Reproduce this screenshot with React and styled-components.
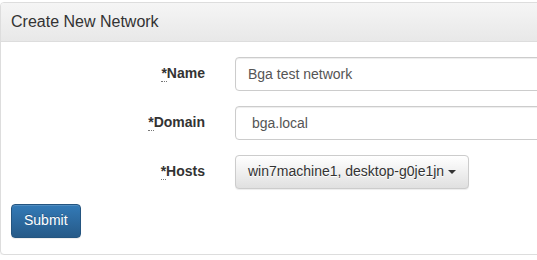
import React from "react";
import styled, { createGlobalStyle } from "styled-components";

const Global = createGlobalStyle`
  html, body { margin: 0; padding: 0; overflow: hidden; background: #fff; }
  body {
    font-family: "Liberation Sans", Arial, Helvetica, sans-serif;
    font-size: 14px;
    line-height: 1.42857;
    color: #333;
  }
  * { box-sizing: border-box; }
`;

const Panel = styled.div`
  margin-top: 2px;
  width: 600px;
  border: 1px solid #ddd;
  border-radius: 4px;
  box-shadow: 0 1px 2px rgba(0, 0, 0, 0.05);
  background: #fff;
`;

const Heading = styled.div`
  padding: 10px 10px;
  border-bottom: 1px solid #ddd;
  border-top-left-radius: 3px;
  border-top-right-radius: 3px;
  background-image: linear-gradient(to bottom, #f5f5f5 0, #e8e8e8 100%);
  color: #333;
`;

const Title = styled.h3`
  margin: 0;
  font-size: 16px;
  font-weight: 400;
  line-height: 1.1;
  color: inherit;
`;

const Body = styled.form`
  padding: 15px 15px 16px 10px;
  display: flex;
  flex-direction: column;
  gap: 15px;
`;

const Row = styled.div`
  display: grid;
  grid-template-columns: 194px 1fr;
  column-gap: 30px;
  align-items: start;
`;

const Actions = styled.div`
  display: flex;
`;

const Label = styled.label`
  padding-top: 7px;
  text-align: right;
  font-weight: 700;
  color: #333;
`;

const Req = styled.abbr`
  text-decoration: none;
  border-bottom: 1px dotted #777;
  cursor: help;
`;

const Input = styled.input`
  display: block;
  width: 100%;
  height: 34px;
  padding: 6px 12px;
  font-family: inherit;
  font-size: 14px;
  line-height: 1.42857;
  color: #555;
  background: #fff;
  border: 1px solid #ccc;
  border-radius: 4px;
  box-shadow: inset 0 1px 1px rgba(0, 0, 0, 0.075);
`;

const Btn = styled.button`
  display: inline-flex;
  align-items: center;
  gap: 4px;
  height: 34px;
  padding: 6px 12px;
  font-family: inherit;
  font-size: 14px;
  line-height: 1.42857;
  border-radius: 4px;
  cursor: pointer;
  justify-self: start;
  color: ${(p) => (p.$primary ? "#fff" : "#333")};
  border: 1px solid ${(p) => (p.$primary ? "#245580" : "#ccc")};
  background-image: ${(p) =>
    p.$primary
      ? "linear-gradient(to bottom, #337ab7 0, #265a88 100%)"
      : "linear-gradient(to bottom, #fff 0, #e0e0e0 100%)"};
  text-shadow: ${(p) =>
    p.$primary ? "0 -1px 0 rgba(0,0,0,.2)" : "0 1px 0 #fff"};
  box-shadow: inset 0 1px 0 rgba(255, 255, 255, 0.15),
    0 1px 1px rgba(0, 0, 0, 0.075);
`;

const Caret = styled.span`
  display: inline-block;
  width: 0;
  height: 0;
  border-top: 4px solid #333;
  border-left: 4px solid transparent;
  border-right: 4px solid transparent;
`;

const Field = ({ name, children }) => (
  <Row>
    <Label>
      <Req title="required">*</Req>
      {name}
    </Label>
    {children}
  </Row>
);

export default function App() {
  return (
    <>
      <Global />
      <Panel>
        <Heading>
          <Title>Create New Network</Title>
        </Heading>
        <Body onSubmit={(e) => e.preventDefault()}>
          <Field name="Name">
            <Input defaultValue="Bga test network" />
          </Field>
          <Field name="Domain">
            <Input defaultValue=" bga.local" />
          </Field>
          <Field name="Hosts">
            <Btn type="button">
              win7machine1, desktop-g0je1jn<Caret />
            </Btn>
          </Field>
          <Actions>
            <Btn $primary type="submit">Submit</Btn>
          </Actions>
        </Body>
      </Panel>
    </>
  );
}
